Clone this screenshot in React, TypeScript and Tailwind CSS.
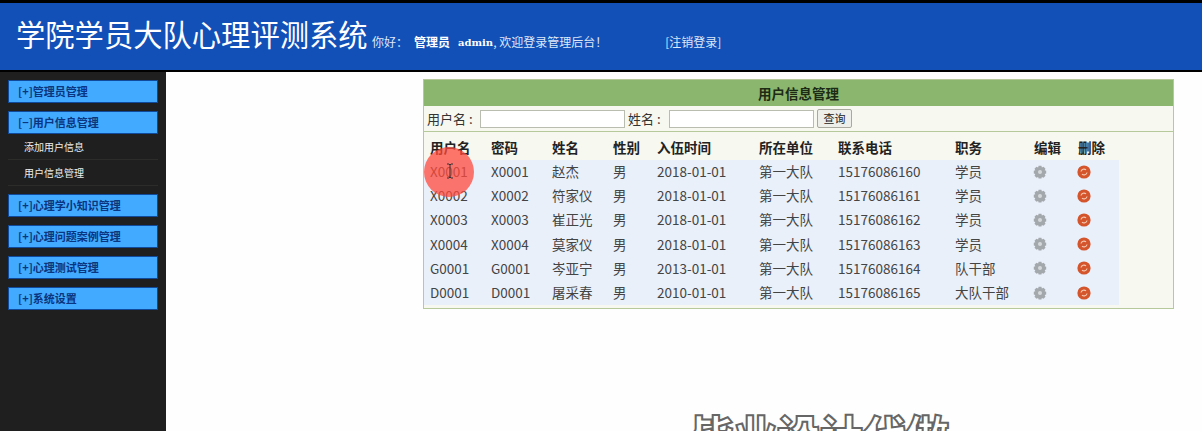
const font = { fontFamily: '"Noto Sans CJK SC", "Liberation Sans", sans-serif' };

const menus = [
  { title: '[+]管理员管理' },
  { title: '[−]用户信息管理', items: ['添加用户信息', '用户信息管理'] },
  { title: '[+]心理学小知识管理' },
  { title: '[+]心理问题案例管理' },
  { title: '[+]心理测试管理' },
  { title: '[+]系统设置' },
];

const rows = [
  ['X0001', 'X0001', '赵杰', '男', '2018-01-01', '第一大队', '15176086160', '学员'],
  ['X0002', 'X0002', '符家仪', '男', '2018-01-01', '第一大队', '15176086161', '学员'],
  ['X0003', 'X0003', '崔正光', '男', '2018-01-01', '第一大队', '15176086162', '学员'],
  ['X0004', 'X0004', '莫家仪', '男', '2018-01-01', '第一大队', '15176086163', '学员'],
  ['G0001', 'G0001', '岑亚宁', '男', '2013-01-01', '第一大队', '15176086164', '队干部'],
  ['D0001', 'D0001', '屠采春', '男', '2010-01-01', '第一大队', '15176086165', '大队干部'],
];

const heads = ['用户名', '密码', '姓名', '性别', '入伍时间', '所在单位', '联系电话', '职务', '编辑', '删除'];
const widths = ['w-[61px]', 'w-[61px]', 'w-[61px]', 'w-[44px]', 'w-[102px]', 'w-[79px]', 'w-[117px]', 'w-[79px]', 'w-[44px]', 'w-[47px]'];

const GearIcon = () => (
  <svg width="14" height="14" viewBox="0 0 14 14" className="block">
    <path
      d="M5.6 .8h2.8l.5 1.7 1.6-.8 2 2-.8 1.6 1.5.5v2.8l-1.5.5.8 1.6-2 2-1.6-.8-.5 1.5H5.6l-.5-1.5-1.6.8-2-2 .8-1.6-1.5-.5V5.8l1.5-.5-.8-1.6 2-2 1.6.8z"
      fill="#a3a8ac"
    />
    <circle cx="7" cy="7" r="2" fill="#d5d8da" />
  </svg>
);

const DeleteIcon = () => (
  <svg width="14" height="14" viewBox="0 0 14 14" className="block">
    <circle cx="7" cy="7" r="6.6" fill="#d4552c" />
    <path d="M4 6.5a3 3 0 0 1 5-1.6M10 7.5a3 3 0 0 1-5 1.6" fill="none" stroke="#f6c9b0" strokeWidth="1.2" />
  </svg>
);

export default function App() {
  return (
    <div className="relative h-[431px] w-[1202px] overflow-hidden bg-[#fdfefd]" style={font}>
      <header className="flex h-[72px] items-center border-t-[3px] border-b-[2px] border-black bg-[#1250b8] pl-4 text-white">
        <h1 className="-mt-[6px] w-[356px] text-[29.3px] leading-none font-normal whitespace-nowrap">学院学员大队心理评测系统</h1>
        <div className="mt-[11px] flex items-center text-[12px] whitespace-nowrap text-[#dfe8f8]">
          <span className="w-[42px]">你好：</span>
          <span className="w-[44px] font-bold text-white">管理员</span>
          <span className="font-bold text-white" style={{ fontFamily: '"DejaVu Serif", serif', fontSize: 10 }}>admin</span>
          <span>, 欢迎登录管理后台！</span>
          <span className="ml-[58px]">[注销登录]</span>
        </div>
      </header>

      <div className="flex h-[359px]">
        <aside className="w-[166px] shrink-0 bg-[#1e1f1e] pt-[8px] pl-[8px]">
          {menus.map((menu) => (
            <div key={menu.title} className="mb-[8px] w-[150px]">
              <div className="flex h-[23px] items-center border border-[#0f4a9c] bg-[#42abff] pl-[9px] text-[11px] font-bold text-[#0a3580]">
                {menu.title}
              </div>
              {menu.items && (
                <ul className="mb-[1px]">
                  {menu.items.map((item) => (
                    <li key={item} className="flex h-[26px] items-center border-b border-[#2c2c2a] pl-[16px] text-[10px] text-[#eeeeee]">
                      {item}
                    </li>
                  ))}
                </ul>
              )}
            </div>
          ))}
        </aside>

        <main className="flex-1 pt-[7px] pl-[257px]">
          <section className="h-[230px] w-[751px] border border-[#b5c99a] bg-[#f7f8f0]">
            <div className="flex h-[26px] items-center justify-center bg-[#8ab66e] text-[13.5px] font-bold text-[#1d2a14]">
              用户信息管理
            </div>
            <div className="flex h-[26px] items-center border-b border-[#b5c99a] pl-[3px] text-[13px] text-[#333333]">
              <label className="w-[53px]">用户名 :</label>
              <input className="h-[18px] w-[145px] border border-[#b9bdb0] bg-white" />
              <label className="ml-[3px] w-[41px]">姓名 :</label>
              <input className="h-[18px] w-[145px] border border-[#b9bdb0] bg-white" />
              <button className="ml-[3px] h-[19px] w-[35px] rounded-[2px] border border-[#a9a9a0] bg-[#eeeeea] text-[11px] text-[#222222]">
                查询
              </button>
            </div>
            <table className="table-fixed border-collapse text-[13.5px]">
              <thead>
                <tr className="h-[28px]">
                  {heads.map((head, i) => (
                    <th key={head} className={`${widths[i]} pt-[3px] pl-[6px] text-left font-semibold text-[#222222]`}>
                      {head}
                    </th>
                  ))}
                </tr>
              </thead>
              <tbody className="bg-[#e9f0fa] text-[#444444]">
                {rows.map((row) => (
                  <tr key={row[0]} className="h-[24.2px]">
                    {row.map((cell, i) => (
                      <td key={i} className="pb-[2px] pl-[6px] whitespace-nowrap">{cell}</td>
                    ))}
                    <td className="pb-[1px] pl-[5px]"><GearIcon /></td>
                    <td className="pb-[1px] pl-[5px]"><DeleteIcon /></td>
                  </tr>
                ))}
              </tbody>
            </table>
          </section>
        </main>
      </div>

      {/* screen recording overlays */}
      <div className="pointer-events-none absolute top-[147px] left-[424px] h-[50px] w-[50px] rounded-full bg-[#ff4a3c]/75" />
      <svg width="8" height="16" viewBox="0 0 8 16" className="pointer-events-none absolute top-[163px] left-[446px]">
        <path d="M1 1h2l1 1 1-1h2M4 2v12M1 15h2l1-1 1 1h2" fill="none" stroke="#333333" strokeWidth="1" />
      </svg>
      <div className="absolute top-[412px] left-[691px] text-[43px] leading-none font-black whitespace-nowrap text-white [-webkit-text-stroke:2px_#666666]">
        毕业设计代做
      </div>
    </div>
  );
}
